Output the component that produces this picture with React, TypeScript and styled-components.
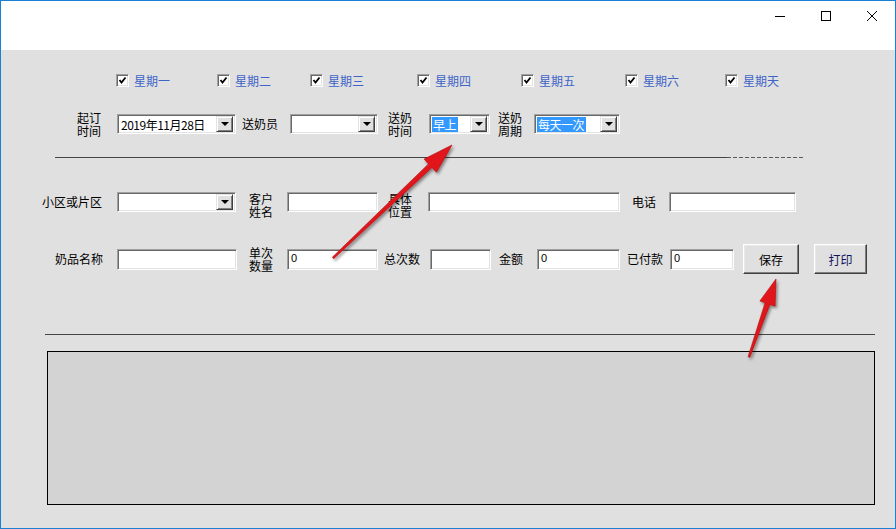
import React from 'react';
import styled, { createGlobalStyle } from 'styled-components';

const GlobalStyle = createGlobalStyle`
  body {
    margin: 0;
    background: #ffffff;
    font-family: "Noto Sans CJK SC", "Liberation Sans", sans-serif;
    font-size: 12px;
  }
`;

const Window = styled.div`
  position: relative;
  width: 896px;
  height: 529px;
  box-sizing: border-box;
  border: 1px solid #1c7fd6;
  background: #e0e0e0;
  display: flex;
  flex-direction: column;
  overflow: hidden;
`;

const TitleBar = styled.div`
  flex: none;
  height: 49px;
  background: #ffffff;
  display: flex;
  justify-content: flex-end;
  align-items: flex-start;
`;

const CaptionButton = styled.div`
  width: 46px;
  height: 30px;
  display: flex;
  align-items: center;
  justify-content: center;
`;

const Body = styled.div`
  flex: 1;
  display: flex;
  flex-direction: column;
  color: #000000;
`;

const DayRow = styled.div`
  display: flex;
  align-items: center;
  height: 13px;
  margin-top: 24px;
  padding-left: 115px;
`;

const DayItem = styled.div<{ $w?: number }>`
  display: flex;
  align-items: center;
  gap: 5px;
  width: ${(p) => (p.$w ? `${p.$w}px` : 'auto')};
  flex: none;
`;

const CheckBox = styled.div`
  width: 13px;
  height: 13px;
  box-sizing: border-box;
  background: #ffffff;
  border: 1px solid;
  border-color: #a0a0a0 #ffffff #ffffff #a0a0a0;
  box-shadow: inset 1px 1px #696969, inset -1px -1px #e3e3e3;
  display: flex;
  align-items: center;
  justify-content: center;
`;

const DayLabel = styled.span`
  color: #3e64c8;
  line-height: 13px;
  white-space: nowrap;
`;

const FormRow = styled.div<{ $mt: number; $h: number; $align: string }>`
  display: flex;
  align-items: ${(p) => p.$align};
  height: ${(p) => p.$h}px;
  margin-top: ${(p) => p.$mt}px;
`;

const Label = styled.span<{ $ml: number; $h?: number }>`
  margin-left: ${(p) => p.$ml}px;
  line-height: ${(p) => (p.$h ? `${p.$h}px` : '14px')};
  white-space: nowrap;
  flex: none;
`;

const TwoLine = styled.span<{ $ml: number }>`
  margin-left: ${(p) => p.$ml}px;
  display: flex;
  flex-direction: column;
  line-height: 13px;
  white-space: nowrap;
  flex: none;
`;

const Sunken = styled.div<{ $ml: number; $w: number; $h: number }>`
  margin-left: ${(p) => p.$ml}px;
  width: ${(p) => p.$w}px;
  height: ${(p) => p.$h}px;
  flex: none;
  box-sizing: border-box;
  background: #ffffff;
  border: 1px solid;
  border-color: #a0a0a0 #ffffff #ffffff #a0a0a0;
  box-shadow: inset 1px 1px #696969, inset -1px -1px #e3e3e3;
`;

const ComboBox = styled(Sunken)`
  display: flex;
  align-items: center;
  padding: 1px 2px 1px 2px;
`;

const ComboText = styled.span<{ $selected?: boolean }>`
  flex: 1;
  line-height: 15px;
  white-space: nowrap;
  overflow: hidden;
  letter-spacing: -0.5px;
  span {
    padding: 0 2px 0 1px;
    background: ${(p) => (p.$selected ? '#3399ff' : 'transparent')};
    color: ${(p) => (p.$selected ? '#ffffff' : '#000000')};
  }
`;

const DropButton = styled.div`
  width: 17px;
  height: 16px;
  flex: none;
  box-sizing: border-box;
  background: #e0e0e0;
  border: 1px solid;
  border-color: #e3e3e3 #404040 #404040 #e3e3e3;
  box-shadow: inset 1px 1px #ffffff, inset -1px -1px #808080;
  display: flex;
  align-items: center;
  justify-content: center;
  &::after {
    content: '';
    border-left: 4px solid transparent;
    border-right: 4px solid transparent;
    border-top: 4px solid #000000;
  }
`;

const TextBox = styled(Sunken)`
  padding: 2px 3px;
  line-height: 12px;
  font-family: "Liberation Sans", sans-serif;
  font-size: 11px;
`;

const PushButton = styled.div<{ $ml: number; $w: number; $color?: string }>`
  margin-left: ${(p) => p.$ml}px;
  width: ${(p) => p.$w}px;
  height: 30px;
  flex: none;
  box-sizing: border-box;
  background: #e0e0e0;
  border: 1px solid;
  border-color: #ffffff #404040 #404040 #ffffff;
  box-shadow: inset -1px -1px #808080, inset 1px 1px #e8e8e8;
  display: flex;
  align-items: center;
  justify-content: center;
  color: ${(p) => p.$color || '#000000'};
`;

const Rule = styled.div<{ $mt: number; $ml: number }>`
  display: flex;
  margin-top: ${(p) => p.$mt}px;
  margin-left: ${(p) => p.$ml}px;
  height: 1px;
`;

const RuleSolid = styled.div<{ $w: number }>`
  width: ${(p) => p.$w}px;
  background: #454545;
`;

const RuleDashed = styled.div<{ $w: number }>`
  width: ${(p) => p.$w}px;
  background: repeating-linear-gradient(90deg, #5a5a5a 0 4px, transparent 4px 6px);
`;

const ListBox = styled.div`
  margin-top: 16px;
  margin-left: 46px;
  width: 828px;
  height: 154px;
  box-sizing: border-box;
  border: 1px solid #000000;
  background: #d3d3d3;
`;

const Overlay = styled.svg`
  position: absolute;
  left: -1px;
  top: -1px;
  pointer-events: none;
`;

const days: { name: string; w?: number }[] = [
  { name: '星期一', w: 101 },
  { name: '星期二', w: 93 },
  { name: '星期三', w: 107 },
  { name: '星期四', w: 104 },
  { name: '星期五', w: 104 },
  { name: '星期六', w: 100 },
  { name: '星期天' },
];

const Check = () => (
  <svg width="9" height="9" viewBox="0 0 9 9">
    <polyline points="1.5,4 3.5,6.5 7.5,1.5" fill="none" stroke="#000" strokeWidth="1.8" />
  </svg>
);

function Combo(props: { ml: number; w: number; text?: string; selected?: boolean }) {
  return (
    <ComboBox $ml={props.ml} $w={props.w} $h={20}>
      <ComboText $selected={props.selected}>
        <span>{props.text}</span>
      </ComboText>
      <DropButton />
    </ComboBox>
  );
}

function Arrow(props: { points: string }) {
  return <polygon points={props.points} fill="#e0161a" stroke="#b00c10" strokeWidth="0.6" filter="url(#shadow)" />;
}

function App() {
  return (
    <>
      <GlobalStyle />
      <Window>
        <TitleBar>
          <CaptionButton>
            <svg width="10" height="10" viewBox="0 0 10 10">
              <line x1="0" y1="5.5" x2="10" y2="5.5" stroke="#000" strokeWidth="1" />
            </svg>
          </CaptionButton>
          <CaptionButton>
            <svg width="10" height="10" viewBox="0 0 10 10">
              <rect x="0.5" y="0.5" width="9" height="9" fill="none" stroke="#000" strokeWidth="1" />
            </svg>
          </CaptionButton>
          <CaptionButton>
            <svg width="10" height="10" viewBox="0 0 10 10">
              <path d="M0 0 L10 10 M10 0 L0 10" stroke="#000" strokeWidth="1" />
            </svg>
          </CaptionButton>
        </TitleBar>
        <Body>
          <DayRow>
            {days.map((d) => (
              <DayItem key={d.name} $w={d.w}>
                <CheckBox>
                  <Check />
                </CheckBox>
                <DayLabel>{d.name}</DayLabel>
              </DayItem>
            ))}
          </DayRow>

          <FormRow $mt={24} $h={26} $align="center">
            <TwoLine $ml={76}>
              <span>起订</span>
              <span>时间</span>
            </TwoLine>
            <Combo ml={16} w={119} text="2019年11月28日" />
            <Label $ml={6}>送奶员</Label>
            <Combo ml={12} w={88} />
            <TwoLine $ml={10}>
              <span>送奶</span>
              <span>时间</span>
            </TwoLine>
            <Combo ml={17} w={61} text="早上" selected />
            <TwoLine $ml={8}>
              <span>送奶</span>
              <span>周期</span>
            </TwoLine>
            <Combo ml={12} w={86} text="每天一次" selected />
          </FormRow>

          <Rule $mt={20} $ml={54}>
            <RuleSolid $w={672} />
            <RuleDashed $w={77} />
          </Rule>

          <FormRow $mt={34} $h={26} $align="flex-start">
            <Label $ml={41} $h={20}>小区或片区</Label>
            <Combo ml={15} w={119} />
            <TwoLine $ml={13}>
              <span>客户</span>
              <span>姓名</span>
            </TwoLine>
            <TextBox $ml={14} $w={91} $h={20} />
            <TwoLine $ml={10}>
              <span>具体</span>
              <span>位置</span>
            </TwoLine>
            <TextBox $ml={16} $w={192} $h={20} />
            <Label $ml={12} $h={20}>电话</Label>
            <TextBox $ml={13} $w={127} $h={20} />
          </FormRow>

          <FormRow $mt={26} $h={30} $align="center">
            <Label $ml={54}>奶品名称</Label>
            <TextBox $ml={14} $w={120} $h={21} />
            <TwoLine $ml={12}>
              <span>单次</span>
              <span>数量</span>
            </TwoLine>
            <TextBox $ml={14} $w={91} $h={21}>0</TextBox>
            <Label $ml={6}>总次数</Label>
            <TextBox $ml={10} $w={61} $h={21} />
            <Label $ml={8} $h={18}>金额</Label>
            <TextBox $ml={14} $w={83} $h={21}>0</TextBox>
            <Label $ml={7} $h={20}>已付款</Label>
            <TextBox $ml={7} $w={64} $h={21}>0</TextBox>
            <PushButton $ml={9} $w={56}>保存</PushButton>
            <PushButton $ml={15} $w={53} $color="#14145a">打印</PushButton>
          </FormRow>

          <Rule $mt={60} $ml={44}>
            <RuleSolid $w={830} />
          </Rule>

          <ListBox />
        </Body>

        <Overlay width="896" height="529" viewBox="0 0 896 529">
          <defs>
            <filter id="shadow" x="-20%" y="-20%" width="140%" height="140%">
              <feDropShadow dx="1.5" dy="2" stdDeviation="1.5" floodColor="#000" floodOpacity="0.45" />
            </filter>
          </defs>
          <Arrow points="333.7,258.7 432.0,167.5 436.5,172.2 452,145 424.1,159.1 428.5,163.9 332.3,257.3" />
          <Arrow points="749.9,357.3 769.9,304.4 775.1,306.2 776,279 759.9,301.0 765.1,302.8 748.1,356.7" />
        </Overlay>
      </Window>
    </>
  );
}

export default App;
